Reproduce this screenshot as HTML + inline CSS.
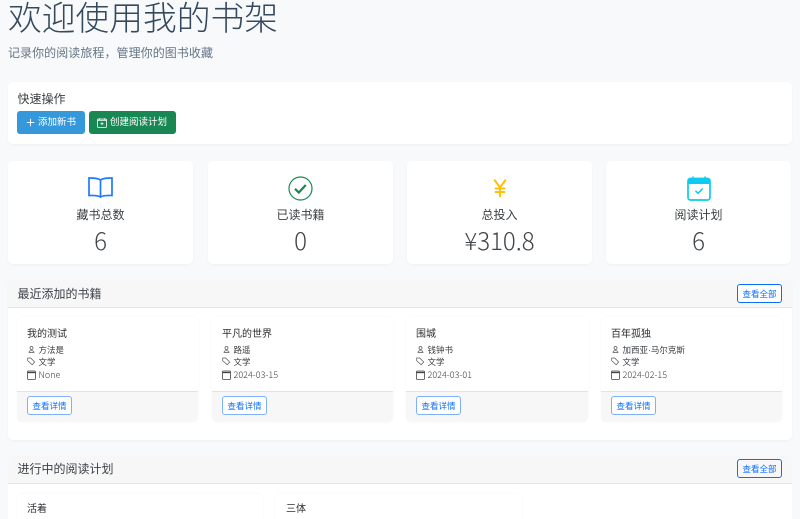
<!DOCTYPE html>
<html lang="zh-CN"><head><meta charset="utf-8"><title>我的书架</title>
<style>
*{box-sizing:border-box}
html,body{margin:0;padding:0;width:800px;height:519px;overflow:hidden}
#w{position:relative;width:800px;height:519px;overflow:hidden;background:#f8f9fa;font-family:"Liberation Sans","Noto Sans CJK SC",sans-serif;color:#212529}
.a{position:absolute;white-space:nowrap}
.card{position:absolute;background:#fff;border-radius:5px;box-shadow:0 1px 2px rgba(0,0,0,.04)}
.stat{top:161px;width:185px;height:103px;text-align:center}
.stat svg{position:absolute}
.stat .l{position:absolute;left:0;right:0;top:45px;font-size:12px;line-height:18px;color:#3a3e42}
.stat .v{position:absolute;left:0;right:0;top:61px;font-family:"Noto Sans CJK SC",sans-serif;font-size:24px;line-height:36px;font-weight:300;color:#3f4448}
.btn{position:absolute;border-radius:3px;font-size:9.5px;line-height:23px;height:23px;color:#fff;white-space:nowrap}
.head{position:absolute;left:0;right:0;top:0;background:#f7f7f8;border-bottom:1px solid #e2e3e5;border-radius:5px 5px 0 0}
.head span{position:absolute;left:9.5px;font-size:12px;color:#3c4248;line-height:18px}
.ol{position:absolute;border:1px solid #0d6efd;border-radius:3px;background:#fff;color:#0d6efd;font-size:8.5px;line-height:18px;height:19px;text-align:center;white-space:nowrap}
.book{position:absolute;top:37px;height:105px;background:#fff;border-radius:5px;box-shadow:0 0 2px rgba(0,0,0,.04)}
.book .t{position:absolute;left:10px;top:10px;font-size:10px;line-height:15px;color:#2b2e31;white-space:nowrap}
.book .m{position:absolute;left:21.500px;font-size:8.500px;line-height:12px;color:#3a3e42;white-space:nowrap}
.book .m b{font:inherit;font-family:"Noto Sans CJK SC",sans-serif;font-size:9px;font-weight:300}
.book svg{position:absolute;left:10px}
.book .f{position:absolute;left:0;right:0;top:74px;bottom:0;background:#f7f7f8;border-top:1px solid #e2e3e5;border-radius:0 0 5px 5px}
.book .ol{left:10px;top:4px;width:45px;border-color:#7fb0fb;background:#fff}
.plan{position:absolute;top:38px;height:25px;background:#fff;box-shadow:0 0 2px rgba(0,0,0,.05);border-radius:5px 5px 0 0}
.plan span{position:absolute;left:10px;top:7.500px;font-size:10px;line-height:15px;color:#2b2e31}
</style></head><body><div id="w">
<div class="a" style="left:8px;top:-6px;font-size:33.750px;line-height:50px;font-weight:300;color:#34495e">欢迎使用我的书架</div>
<div class="a" style="left:8px;top:44px;font-size:12px;line-height:18px;color:#647586;letter-spacing:.06px">记录你的阅读旅程，管理你的图书收藏</div>

<div class="card" style="left:8px;top:82px;width:784px;height:62px">
<div class="a" style="left:9.500px;top:8px;font-size:12px;line-height:18px;color:#3a3e42">快速操作</div>
<div class="btn" style="left:9px;top:29px;width:68px;background:#3498db"><svg style="position:absolute;left:8.500px;top:7px" width="9" height="9" viewBox="0 0 9 9"><path d="M4.500 .8v7.400M.8 4.500h7.400" stroke="#fff" stroke-width=".9" fill="none"/></svg><span style="position:absolute;left:21px">添加新书</span></div>
<div class="btn" style="left:81px;top:29px;width:87px;background:#198754"><svg style="position:absolute;left:7.500px;top:7px" width="10" height="10" viewBox="0 0 10 10" fill="none" stroke="#fff"><rect x=".5" y="1" width="9" height="8.500" rx="1" stroke-width=".8"/><path d="M2.500 .3v1.500M7.500 .3v1.500M.5 2.300h9" stroke-width=".8"/><path d="M5 4.200v3M3.500 5.700h3" stroke-width=".8"/></svg><span style="position:absolute;left:21px">创建阅读计划</span></div>
</div>

<div class="card stat" style="left:8px">
<svg style="left:80px;top:16px" width="25" height="21" viewBox="0 0 25 21" fill="none" stroke="#1f7bfd" stroke-width="1.700"><path d="M12.500 3C10.500 1.400 7.500.9 1 1v17.500c6-.2 9.500.2 11.500 1.500 2-1.300 5.500-1.700 11.500-1.500V1c-6.500-.1-9.500.4-11.500 2zM12.500 3v17"/></svg>
<div class="l">藏书总数</div><div class="v">6</div></div>
<div class="card stat" style="left:208px">
<svg style="left:79.500px;top:15px" width="25" height="25" viewBox="0 0 25 25" fill="none" stroke="#198754"><circle cx="12.500" cy="12.500" r="11.500" stroke-width="1.200"/><path d="M7 12.800l3.800 3.700 7-7.500" stroke-width="2.200"/></svg>
<div class="l">已读书籍</div><div class="v">0</div></div>
<div class="card stat" style="left:407px">
<svg style="left:86px;top:18px" width="14" height="18" viewBox="0 0 14 18" fill="none" stroke="#ffc107" stroke-width="2"><path d="M1.200 .5l5.800 8 5.800-8M7 8.500v9.500M1.800 9.500h10.400M1.800 13h10.400"/></svg>
<div class="l">总投入</div><div class="v">¥310.8</div></div>
<div class="card stat" style="left:606px">
<svg style="left:81px;top:15px" width="24" height="25" viewBox="0 0 24 25" fill="none" stroke="#0dcaf0"><rect x="1" y="2.500" width="22" height="21.500" rx="2.500" stroke-width="1.700"/><path d="M1 3.500h22V7.500H1z" fill="#0dcaf0" stroke-width="1"/><path d="M6 .5v2M18 .5v2" stroke-width="1.500"/><path d="M8.500 14.800l2.600 2.500 4.600-4.800" stroke-width="1.500"/></svg>
<div class="l">阅读计划</div><div class="v">6</div></div>

<div class="card" style="left:8px;top:280px;width:784px;height:160px">
<div class="head" style="height:28px"><span style="top:5px">最近添加的书籍</span><div class="ol" style="left:729px;top:4px;width:45px">查看全部</div></div>

<div class="book" style="left:9px;width:181px"><div class="t">我的测试</div>
<svg style="top:28px" width="9" height="9" viewBox="0 0 9 9" fill="none" stroke="#555" stroke-width=".7"><circle cx="4.500" cy="3" r="1.500"/><path d="M2 7.500c0-1.300.8-1.800 2.500-1.800s2.500.5 2.500 1.800z"/></svg><div class="m" style="top:27px">方法是</div>
<svg style="top:40px" width="9" height="9" viewBox="0 0 9 9" fill="none" stroke="#555" stroke-width=".7"><path d="M.7 1h3l4 4-2.500 2.700-4.500-4z"/></svg><div class="m" style="top:39px">文学</div>
<svg style="top:53px" width="9" height="10" viewBox="0 0 9 10" fill="none" stroke="#444" stroke-width=".8"><rect x=".5" y="1" width="8" height="8.500" rx="1"/><path d="M.5 2.500h8" stroke-width="1.300"/></svg><div class="m" style="top:52px"><b>None</b></div>
<div class="f"><div class="ol">查看详情</div></div></div>

<div class="book" style="left:204px;width:181px"><div class="t">平凡的世界</div>
<svg style="top:28px" width="9" height="9" viewBox="0 0 9 9" fill="none" stroke="#555" stroke-width=".7"><circle cx="4.500" cy="3" r="1.500"/><path d="M2 7.500c0-1.300.8-1.800 2.500-1.800s2.500.5 2.500 1.800z"/></svg><div class="m" style="top:27px">路遥</div>
<svg style="top:40px" width="9" height="9" viewBox="0 0 9 9" fill="none" stroke="#555" stroke-width=".7"><path d="M.7 1h3l4 4-2.500 2.700-4.500-4z"/></svg><div class="m" style="top:39px">文学</div>
<svg style="top:53px" width="9" height="10" viewBox="0 0 9 10" fill="none" stroke="#444" stroke-width=".8"><rect x=".5" y="1" width="8" height="8.500" rx="1"/><path d="M.5 2.500h8" stroke-width="1.300"/></svg><div class="m" style="top:52px"><b>2024-03-15</b></div>
<div class="f"><div class="ol">查看详情</div></div></div>

<div class="book" style="left:398px;width:182px"><div class="t">围城</div>
<svg style="top:28px" width="9" height="9" viewBox="0 0 9 9" fill="none" stroke="#555" stroke-width=".7"><circle cx="4.500" cy="3" r="1.500"/><path d="M2 7.500c0-1.300.8-1.800 2.500-1.800s2.500.5 2.500 1.800z"/></svg><div class="m" style="top:27px">钱钟书</div>
<svg style="top:40px" width="9" height="9" viewBox="0 0 9 9" fill="none" stroke="#555" stroke-width=".7"><path d="M.7 1h3l4 4-2.500 2.700-4.500-4z"/></svg><div class="m" style="top:39px">文学</div>
<svg style="top:53px" width="9" height="10" viewBox="0 0 9 10" fill="none" stroke="#444" stroke-width=".8"><rect x=".5" y="1" width="8" height="8.500" rx="1"/><path d="M.5 2.500h8" stroke-width="1.300"/></svg><div class="m" style="top:52px"><b>2024-03-01</b></div>
<div class="f"><div class="ol">查看详情</div></div></div>

<div class="book" style="left:593px;width:181px"><div class="t">百年孤独</div>
<svg style="top:28px" width="9" height="9" viewBox="0 0 9 9" fill="none" stroke="#555" stroke-width=".7"><circle cx="4.500" cy="3" r="1.500"/><path d="M2 7.500c0-1.300.8-1.800 2.500-1.800s2.500.5 2.500 1.800z"/></svg><div class="m" style="top:27px">加西亚·马尔克斯</div>
<svg style="top:40px" width="9" height="9" viewBox="0 0 9 9" fill="none" stroke="#555" stroke-width=".7"><path d="M.7 1h3l4 4-2.500 2.700-4.500-4z"/></svg><div class="m" style="top:39px">文学</div>
<svg style="top:53px" width="9" height="10" viewBox="0 0 9 10" fill="none" stroke="#444" stroke-width=".8"><rect x=".5" y="1" width="8" height="8.500" rx="1"/><path d="M.5 2.500h8" stroke-width="1.300"/></svg><div class="m" style="top:52px"><b>2024-02-15</b></div>
<div class="f"><div class="ol">查看详情</div></div></div>
</div>

<div class="card" style="left:8px;top:456px;width:784px;height:63px;border-radius:5px 5px 0 0;box-shadow:none">
<div class="head" style="height:28px"><span style="top:4px">进行中的阅读计划</span><div class="ol" style="left:729px;top:3px;width:45px;background:#f7f7f8">查看全部</div></div>
<div class="plan" style="left:9px;width:246px"><span>活着</span></div>
<div class="plan" style="left:268px;width:246px"><span>三体</span></div>
</div>
</div></body></html>
